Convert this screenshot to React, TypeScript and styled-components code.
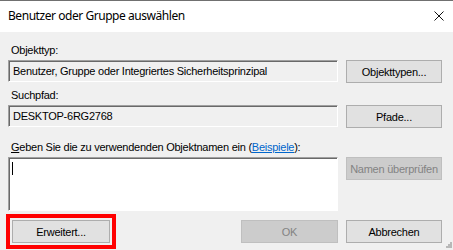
import React from "react";
import styled, { createGlobalStyle } from "styled-components";

const GlobalStyle = createGlobalStyle`
  html, body {
    margin: 0;
    padding: 0;
    background: #f0f0f0;
  }
  * {
    box-sizing: border-box;
  }
`;

export default function App(): JSX.Element {
  return (
    <Window>
      <GlobalStyle />
      <TitleBar>
        <Title>Benutzer oder Gruppe auswählen</Title>
        <CloseButton aria-label="Schließen">
          <svg width="10" height="10" viewBox="0 0 10 10">
            <path d="M0.5 0.5 L9.5 9.5 M9.5 0.5 L0.5 9.5" stroke="#111" strokeWidth="1" />
          </svg>
        </CloseButton>
      </TitleBar>

      <Body>
        <Label>Objekttyp:</Label>
        <FieldRow>
          <ReadOnlyBox>Benutzer, Gruppe oder Integriertes Sicherheitsprinzipal</ReadOnlyBox>
          <Button>Objekttypen...</Button>
        </FieldRow>

        <Label gap={6}>Suchpfad:</Label>
        <FieldRow>
          <ReadOnlyBox>DESKTOP-6RG2768</ReadOnlyBox>
          <Button>Pfade...</Button>
        </FieldRow>

        <Label gap={13}>
          <u>G</u>eben Sie die zu verwendenden Objektnamen ein (<Link>Beispiele</Link>):
        </Label>
        <FieldRow>
          <NamesInput>
            <Caret />
          </NamesInput>
          <Button disabled>Namen überprüfen</Button>
        </FieldRow>

        <Footer>
          <Highlight>
            <Button>Erweitert...</Button>
          </Highlight>
          <FooterRight>
            <Button disabled>OK</Button>
            <Button>Abbrechen</Button>
          </FooterRight>
        </Footer>
      </Body>

      <Grip width="6" height="6" viewBox="0 0 6 6">
        <rect x="4" y="0" width="2" height="2" fill="#b8b8b8" />
        <rect x="2" y="2" width="2" height="2" fill="#b8b8b8" />
        <rect x="4" y="2" width="2" height="2" fill="#b8b8b8" />
        <rect x="0" y="4" width="2" height="2" fill="#b8b8b8" />
        <rect x="2" y="4" width="2" height="2" fill="#b8b8b8" />
        <rect x="4" y="4" width="2" height="2" fill="#b8b8b8" />
      </Grip>
    </Window>
  );
}

const Window = styled.div`
  position: relative;
  width: 453px;
  height: 250px;
  overflow: hidden;
  background: #f0f0f0;
  border-top: 1px solid #707070;
  font-family: "Liberation Sans", Arial, sans-serif;
  font-size: 11px;
  letter-spacing: -0.25px;
  color: #000;
`;

const TitleBar = styled.div`
  height: 31px;
  background: #fff;
  display: flex;
  align-items: center;
  justify-content: space-between;
  padding: 0 9px 0 8px;
`;

const Title = styled.div`
  font-family: "Noto Sans", "Open Sans", sans-serif;
  font-size: 12px;
  letter-spacing: -0.45px;
  color: #000;
  padding-bottom: 2px;
`;

const CloseButton = styled.div`
  width: 10px;
  height: 10px;
  display: flex;
  margin-top: -1px;
`;

const Body = styled.div`
  padding: 12px 11px 0 8px;
`;

const Label = styled.div<{ gap?: number }>`
  margin-top: ${({ gap }) => gap ?? 0}px;
  margin-bottom: 3px;
  padding-left: 3px;
  line-height: 13px;
  white-space: nowrap;
`;

const Link = styled.span`
  color: #0066cc;
  text-decoration: underline;
`;

const FieldRow = styled.div`
  display: grid;
  grid-template-columns: 330px 96px;
  column-gap: 8px;
  align-items: start;
`;

const ReadOnlyBox = styled.div`
  height: 22px;
  padding: 0 4px;
  display: flex;
  align-items: center;
  white-space: nowrap;
  overflow: hidden;
  background: #f0f0f0;
  border: 1px solid;
  border-color: #a0a0a0 #ffffff #ffffff #a0a0a0;
  box-shadow: inset 1px 1px 0 #696969;
`;

const NamesInput = styled.div`
  height: 54px;
  background: #fff;
  border: 1px solid;
  border-color: #a0a0a0 #ffffff #ffffff #a0a0a0;
  box-shadow: inset 1px 1px 0 #696969;
  padding: 4px 3px;
`;

const Caret = styled.div`
  width: 1px;
  height: 13px;
  background: #000;
`;

const Button = styled.div<{ disabled?: boolean }>`
  height: 23px;
  display: flex;
  align-items: center;
  justify-content: center;
  white-space: nowrap;
  background: ${({ disabled }) => (disabled ? "#cccccc" : "#e1e1e1")};
  border: 1px solid ${({ disabled }) => (disabled ? "#bfbfbf" : "#adadad")};
  color: ${({ disabled }) => (disabled ? "#838383" : "#000")};
`;

const Footer = styled.div`
  display: flex;
  justify-content: space-between;
  align-items: center;
  margin-top: 3px;
  margin-left: -2px;
`;

const Highlight = styled.div`
  border: 4px solid #ff0000;
  padding: 2px;
  width: 110px;
`;

const FooterRight = styled.div`
  display: grid;
  grid-template-columns: 97px 96px;
  column-gap: 8px;
`;

const Grip = styled.svg`
  position: absolute;
  right: 1px;
  bottom: 2px;
`;
